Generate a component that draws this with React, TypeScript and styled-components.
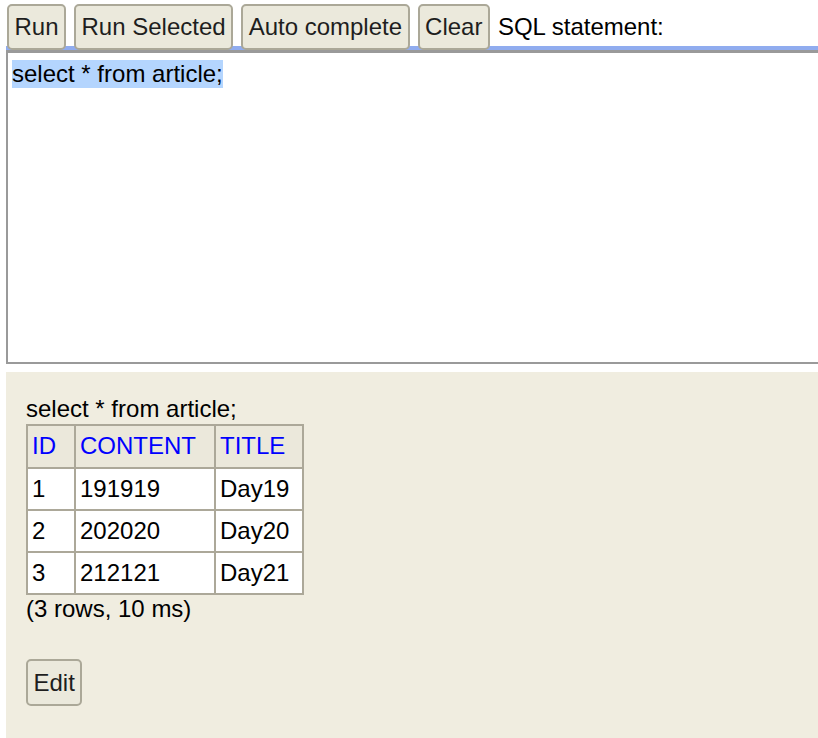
import React from 'react';
import styled, { createGlobalStyle } from 'styled-components';

const GlobalStyle = createGlobalStyle`
  html, body {
    margin: 0;
    padding: 0;
    height: 100%;
    background: #ffffff;
  }
  body {
    font-family: "Liberation Sans", Arial, Helvetica, sans-serif;
    font-size: 24px;
    color: #000;
  }
  #root {
    height: 100%;
  }
`;

const Page = styled.div`
  display: flex;
  flex-direction: column;
  height: 100vh;
  overflow: hidden;
`;

const Toolbar = styled.div`
  position: relative;
  z-index: 1;
  display: flex;
  align-items: center;
  gap: 8px;
  padding: 4px 0 0 7px;
`;

const Button = styled.button`
  height: 46px;
  padding: 0 5.5px;
  border: 2px solid #aba898;
  border-radius: 5px;
  background: #ebe9dc;
  color: #1e1e1e;
  font-family: "Liberation Sans", Arial, Helvetica, sans-serif;
  font-size: 24px;
  line-height: 1;
  cursor: pointer;
`;

const Label = styled.span`
  white-space: nowrap;
`;

const Editor = styled.div`
  margin: 0 0 0 6px;
  height: 314px;
  box-sizing: border-box;
  border: 2px solid #9a9a9a;
  border-top-width: 3px;
  border-right: none;
  box-shadow: 0 -4px 0 #90acef;
  background: #fff;
  padding: 7px 4px 0;
`;

const Selected = styled.span`
  display: inline-block;
  background: #b4d5fe;
  line-height: 28px;
`;

const Result = styled.div`
  flex: 1;
  margin: 8px 0 0 6px;
  background: #f0ede0;
  padding: 24px 20px 0;
`;

const Query = styled.div`
  line-height: 26px;
  margin-bottom: 2px;
`;

const Grid = styled.table`
  border-collapse: collapse;
  table-layout: fixed;
  background: #fff;
`;

const HeadCell = styled.th<{ $w: number }>`
  width: ${p => p.$w}px;
  box-sizing: border-box;
  border: 2px solid #aca899;
  background: #ebe8db;
  color: #0000ff;
  font-weight: normal;
  text-align: left;
  padding: 7px 4px 8px 4px;
  line-height: 26px;
`;

const Cell = styled.td`
  border: 2px solid #aca899;
  padding: 7px 4px;
  line-height: 26px;
  white-space: nowrap;
`;

const Summary = styled.div`
  line-height: 26px;
  margin-top: 1px;
`;

const EditButton = styled(Button)`
  margin-top: 37px;
  height: 47px;
`;

const columns = [
  { name: 'ID', width: 48 },
  { name: 'CONTENT', width: 140 },
  { name: 'TITLE', width: 88 },
];

const rows = [
  ['1', '191919', 'Day19'],
  ['2', '202020', 'Day20'],
  ['3', '212121', 'Day21'],
];

const App: React.FC = () => {
  return (
    <Page>
      <GlobalStyle />
      <Toolbar>
        <Button>Run</Button>
        <Button>Run Selected</Button>
        <Button>Auto complete</Button>
        <Button>Clear</Button>
        <Label>SQL statement:</Label>
      </Toolbar>
      <Editor>
        <Selected>select * from article;</Selected>
      </Editor>
      <Result>
        <Query>select * from article;</Query>
        <Grid>
          <thead>
            <tr>
              {columns.map(c => (
                <HeadCell key={c.name} $w={c.width}>{c.name}</HeadCell>
              ))}
            </tr>
          </thead>
          <tbody>
            {rows.map(r => (
              <tr key={r[0]}>
                {r.map((v, i) => (
                  <Cell key={i}>{v}</Cell>
                ))}
              </tr>
            ))}
          </tbody>
        </Grid>
        <Summary>(3 rows, 10 ms)</Summary>
        <EditButton>Edit</EditButton>
      </Result>
    </Page>
  );
};

export default App;
